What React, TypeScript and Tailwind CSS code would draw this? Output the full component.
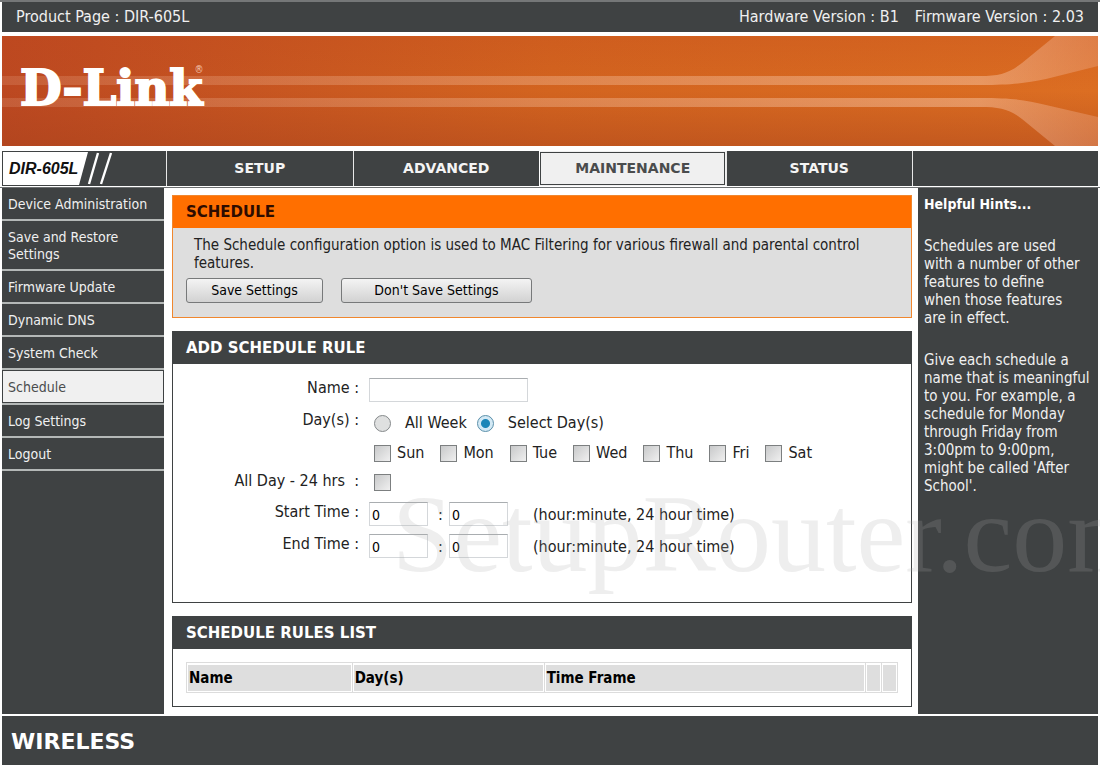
import { useState } from "react";
import type { ReactNode } from "react";

const tabs = ["SETUP", "ADVANCED", "MAINTENANCE", "STATUS"];

const menu = [
  "Device Administration",
  "Save and Restore Settings",
  "Firmware Update",
  "Dynamic DNS",
  "System Check",
  "Schedule",
  "Log Settings",
  "Logout",
];

const days = ["Sun", "Mon", "Tue", "Wed", "Thu", "Fri", "Sat"];

const field =
  "h-6 border border-[#d4d7da] border-t-[#a9adb0] bg-white px-[2px] text-[14px] text-black outline-none";

const tick =
  "size-[17px] shrink-0 appearance-none border border-[#7c7f80] bg-linear-to-br from-[#c8c9ca] to-[#f0f0f0] checked:from-[#2a86b4] checked:to-[#2a86b4]";

function Banner() {
  return (
    <div className="relative flex h-[110px] items-center overflow-hidden bg-linear-to-r from-[#bc4821] via-[#d3641f] via-50% to-[#dc6e22] px-[18px] pb-[6px]">
      <div className="absolute inset-0 bg-linear-to-b from-[#c0481c]/25 via-transparent via-50% to-[#a8421c]/45" />
      <div className="absolute inset-x-0 top-10 mr-[118px] h-[9px] bg-linear-to-r from-[#ffd9c0]/15 to-[#ffd9c0]/40" />
      <div className="absolute inset-x-0 top-[62px] mr-[118px] h-[9px] bg-linear-to-r from-[#ffd9c0]/15 to-[#ffd9c0]/40" />
      <svg className="absolute top-0 right-0" width="118" height="110" viewBox="0 0 118 110" aria-hidden="true">
        <defs>
          <linearGradient id="flare" x1="0" x2="1" y1="0" y2="0">
            <stop offset="0" stopColor="#ffd9c0" stopOpacity="0.4" />
            <stop offset="1" stopColor="#f3b9a0" stopOpacity="0.3" />
          </linearGradient>
        </defs>
        <path d="M0 40C20 40 29 37 42 27L75 0H118V30L66 43C46 47 34 49 0 49Z" fill="url(#flare)" />
        <path d="M0 62C34 62 46 64 66 69L118 81V110H75L42 83C29 73 20 71 0 71Z" fill="url(#flare)" />
      </svg>
      <a href="#home" className="relative flex items-start text-white">
        <span className="font-['DejaVu_Serif',serif] text-[48px] leading-[56px] font-bold [-webkit-text-stroke:2px_#fff]">
          D-Link
        </span>
        <span className="-ml-2 mt-1 text-[10px] leading-3 text-[#f5c9b4]">®</span>
      </a>
    </div>
  );
}

function Panel({ title, tone, children }: { title: string; tone: "orange" | "dark"; children: ReactNode }) {
  const orange = tone === "orange";
  return (
    <section className={orange ? "border border-[#f0872f] bg-[#dedede]" : "border border-[#3f4243] bg-white"}>
      <h2
        className={
          "px-[13px] py-[7px] font-['DejaVu_Sans',sans-serif] text-[15px] leading-[18px] font-bold " +
          (orange ? "bg-[#ff6f00] text-[#2e0c00]" : "bg-[#3f4243] text-white")
        }
      >
        {title}
      </h2>
      {children}
    </section>
  );
}

function Row({ label, id, tall, children }: { label: string; id?: string; tall?: boolean; children: ReactNode }) {
  return (
    <div className={"grid grid-cols-[186px_1fr] gap-x-[10px] " + (tall ? "min-h-8" : "min-h-[31px]")}>
      <label htmlFor={id} className="pt-px text-right leading-[18px] whitespace-pre">
        {label}
      </label>
      <div>{children}</div>
    </div>
  );
}

function Time({ name }: { name: string }) {
  return (
    <div className="flex items-end">
      <input id={name + "-hour"} defaultValue="0" className={field + " w-[59px] pt-[2px]"} />
      <span className="w-[21px] pl-[10px]">:</span>
      <input aria-label={name + " minute"} defaultValue="0" className={field + " w-[59px] pt-[2px]"} />
      <span className="ml-[25px]">(hour:minute, 24 hour time)</span>
    </div>
  );
}

function Radio({ label, checked, onChange }: { label: string; checked: boolean; onChange: () => void }) {
  return (
    <label className="flex items-center gap-[14px]">
      <input
        type="radio"
        name="range"
        checked={checked}
        onChange={onChange}
        className="size-[17px] appearance-none rounded-full border border-[#85898b] bg-[#dfe0e0] checked:border-[#5b91ac] checked:bg-[radial-gradient(circle,#1c86b8_0_4px,#d3e9f5_5px)]"
      />
      {label}
    </label>
  );
}

export default function App() {
  const [allWeek, setAllWeek] = useState(false);
  return (
    <div className="relative min-h-screen overflow-hidden border-t-2 border-[#757778] bg-white px-[2px] font-['DejaVu_Sans_Condensed','DejaVu_Sans',sans-serif] text-[15px] text-[#222]">
      <header>
        <div className="flex h-[30px] items-center justify-between bg-[#3f4243] px-[14px] text-[16px] text-[#f0f0f0]">
          <span>Product Page : DIR-605L</span>
          <div className="flex gap-4">
            <span>Hardware Version : B1</span>
            <span>Firmware Version : 2.03</span>
          </div>
        </div>
        <div className="py-1">
          <Banner />
        </div>
        <nav className="mt-px grid h-[35px] grid-cols-[164px_repeat(4,1fr)_186px] bg-[#3f4243] font-['DejaVu_Sans',sans-serif] text-[14px] font-bold text-[#f4f4f4]">
          <div className="border border-[#3f4243]">
            <svg className="block" width="112" height="33" viewBox="0 0 112 33" role="img" aria-label="DIR-605L">
              <path d="M0 0H85L76 33H0Z" fill="#fff" />
              <path d="M95 1L86 32M108 1L98 32" stroke="#fff" strokeWidth="2.4" />
              <text x="6" y="22" fontFamily="Liberation Sans" fontSize="16" fontWeight="700" fontStyle="italic" fill="#111">
                DIR-605L
              </text>
            </svg>
          </div>
          {tabs.map((tab) => (
            <a
              key={tab}
              href={"#" + tab.toLowerCase()}
              className={
                "flex items-center justify-center border-l " +
                (tab === "MAINTENANCE"
                  ? "border-white bg-[#f0f0f0] text-[#4a4c4d] outline -outline-offset-2 outline-[#3f4243]"
                  : "border-[#e8e8e8]")
              }
            >
              {tab}
            </a>
          ))}
          <div className="border-l border-[#e8e8e8]" />
        </nav>
      </header>

      <div className="-mx-[2px] mt-px h-px bg-[#6d7071]" />

      <div className="grid grid-cols-[162px_1fr_180px]">
        <nav className="bg-[#3f4243] text-[14px] leading-[17px] text-[#f0f0f0]">
          <ul>
            {menu.map((item) => (
              <li key={item} className="border-b-2 border-[#b4b8b7]">
                <a
                  href={"#" + item.toLowerCase().replaceAll(" ", "-")}
                  className={
                    "block " +
                    (item === "Schedule"
                      ? "border border-[#3f4243] bg-[#f0f0f0] px-[5px] pt-2 pb-[6px] text-[#4a4c4d]"
                      : "px-[6px] pt-2 pb-[6px]")
                  }
                >
                  {item}
                </a>
              </li>
            ))}
          </ul>
        </nav>

        <main className="flex flex-col gap-[13px] py-[7px] pr-[6px] pl-2">
          <Panel title="SCHEDULE" tone="orange">
            <div className="px-[13px] pt-2 pb-[14px]">
              <p className="px-2 leading-[18px]">
                The Schedule configuration option is used to MAC Filtering for various firewall and parental control
                features.
              </p>
              <div className="mt-[6px] flex gap-[18px] text-[14px] text-black">
                <button className="h-[25px] w-[137px] rounded-[3px] border border-[#77797a] bg-linear-to-b from-[#f4f4f4] to-[#d2d2d2]">
                  Save Settings
                </button>
                <button className="h-[25px] w-[191px] rounded-[3px] border border-[#77797a] bg-linear-to-b from-[#f4f4f4] to-[#d2d2d2]">
                  Don't Save Settings
                </button>
              </div>
            </div>
          </Panel>

          <Panel title="ADD SCHEDULE RULE" tone="dark">
            <form className="pt-[14px] pb-[36px] text-[16px] leading-[22px]" onSubmit={(e) => e.preventDefault()}>
              <Row label="Name :" id="rule-name" tall>
                <input id="rule-name" className={field + " block w-[159px]"} />
              </Row>
              <Row label="Day(s) :">
                <div className="flex items-center gap-[10px] pt-[2px] pl-[5px]">
                  <Radio label="All Week" checked={allWeek} onChange={() => setAllWeek(true)} />
                  <Radio label="Select Day(s)" checked={!allWeek} onChange={() => setAllWeek(false)} />
                </div>
                <div className="flex gap-4 pt-[10px] pb-[9px] pl-[5px]">
                  {days.map((day) => (
                    <label key={day} className="flex items-center gap-[6px] leading-[18px]">
                      <input type="checkbox" className={tick} />
                      {day}
                    </label>
                  ))}
                </div>
              </Row>
              <Row label="All Day - 24 hrs  :" id="all-day">
                <div className="pt-[3px] pl-[5px]">
                  <input id="all-day" type="checkbox" className={tick + " block"} />
                </div>
              </Row>
              <Row label="Start Time :" id="start-hour" tall>
                <Time name="start" />
              </Row>
              <Row label="End Time :" id="end-hour" tall>
                <Time name="end" />
              </Row>
            </form>
          </Panel>

          <Panel title="SCHEDULE RULES LIST" tone="dark">
            <div className="p-[13px]">
              <table className="w-full table-fixed border-collapse text-left text-black">
                <colgroup>
                  <col className="w-[23.3%]" />
                  <col className="w-[27%]" />
                  <col />
                  <col className="w-4" />
                  <col className="w-4" />
                </colgroup>
                <thead>
                  <tr>
                    {["Name", "Day(s)", "Time Frame", "", ""].map((head, i) => (
                      <th key={i} className="h-[30px] border border-[#dcdcdc] p-px font-bold">
                        <div className="h-[26px] bg-[#dedede] pl-px leading-[26px]">{head}</div>
                      </th>
                    ))}
                  </tr>
                </thead>
              </table>
            </div>
          </Panel>
        </main>

        <aside className="bg-[#3f4243] px-[6px] pt-[7px] leading-[18px] text-[#f0f0f0]">
          <h3 className="text-[14px] font-bold text-white">Helpful Hints...</h3>
          <p className="mt-6 pr-[10px]">
            Schedules are used with a number of other features to define when those features are in effect.
          </p>
          <p className="mt-6">
            Give each schedule a name that is meaningful to you. For example, a schedule for Monday through Friday from
            3:00pm to 9:00pm, might be called 'After School'.
          </p>
        </aside>
      </div>

      <footer className="mt-[2px] bg-[#3f4243] px-[9px] pt-3 pb-4 font-['DejaVu_Sans',sans-serif] text-[22px] leading-[28px] font-bold text-white">
        WIRELESS
      </footer>

      <div className="pointer-events-none absolute top-[466px] left-[392px] font-['Liberation_Serif',serif] text-[110px] leading-[132px] whitespace-nowrap text-[#aaa]/20 select-none">
        SetupRouter.com
      </div>
    </div>
  );
}
